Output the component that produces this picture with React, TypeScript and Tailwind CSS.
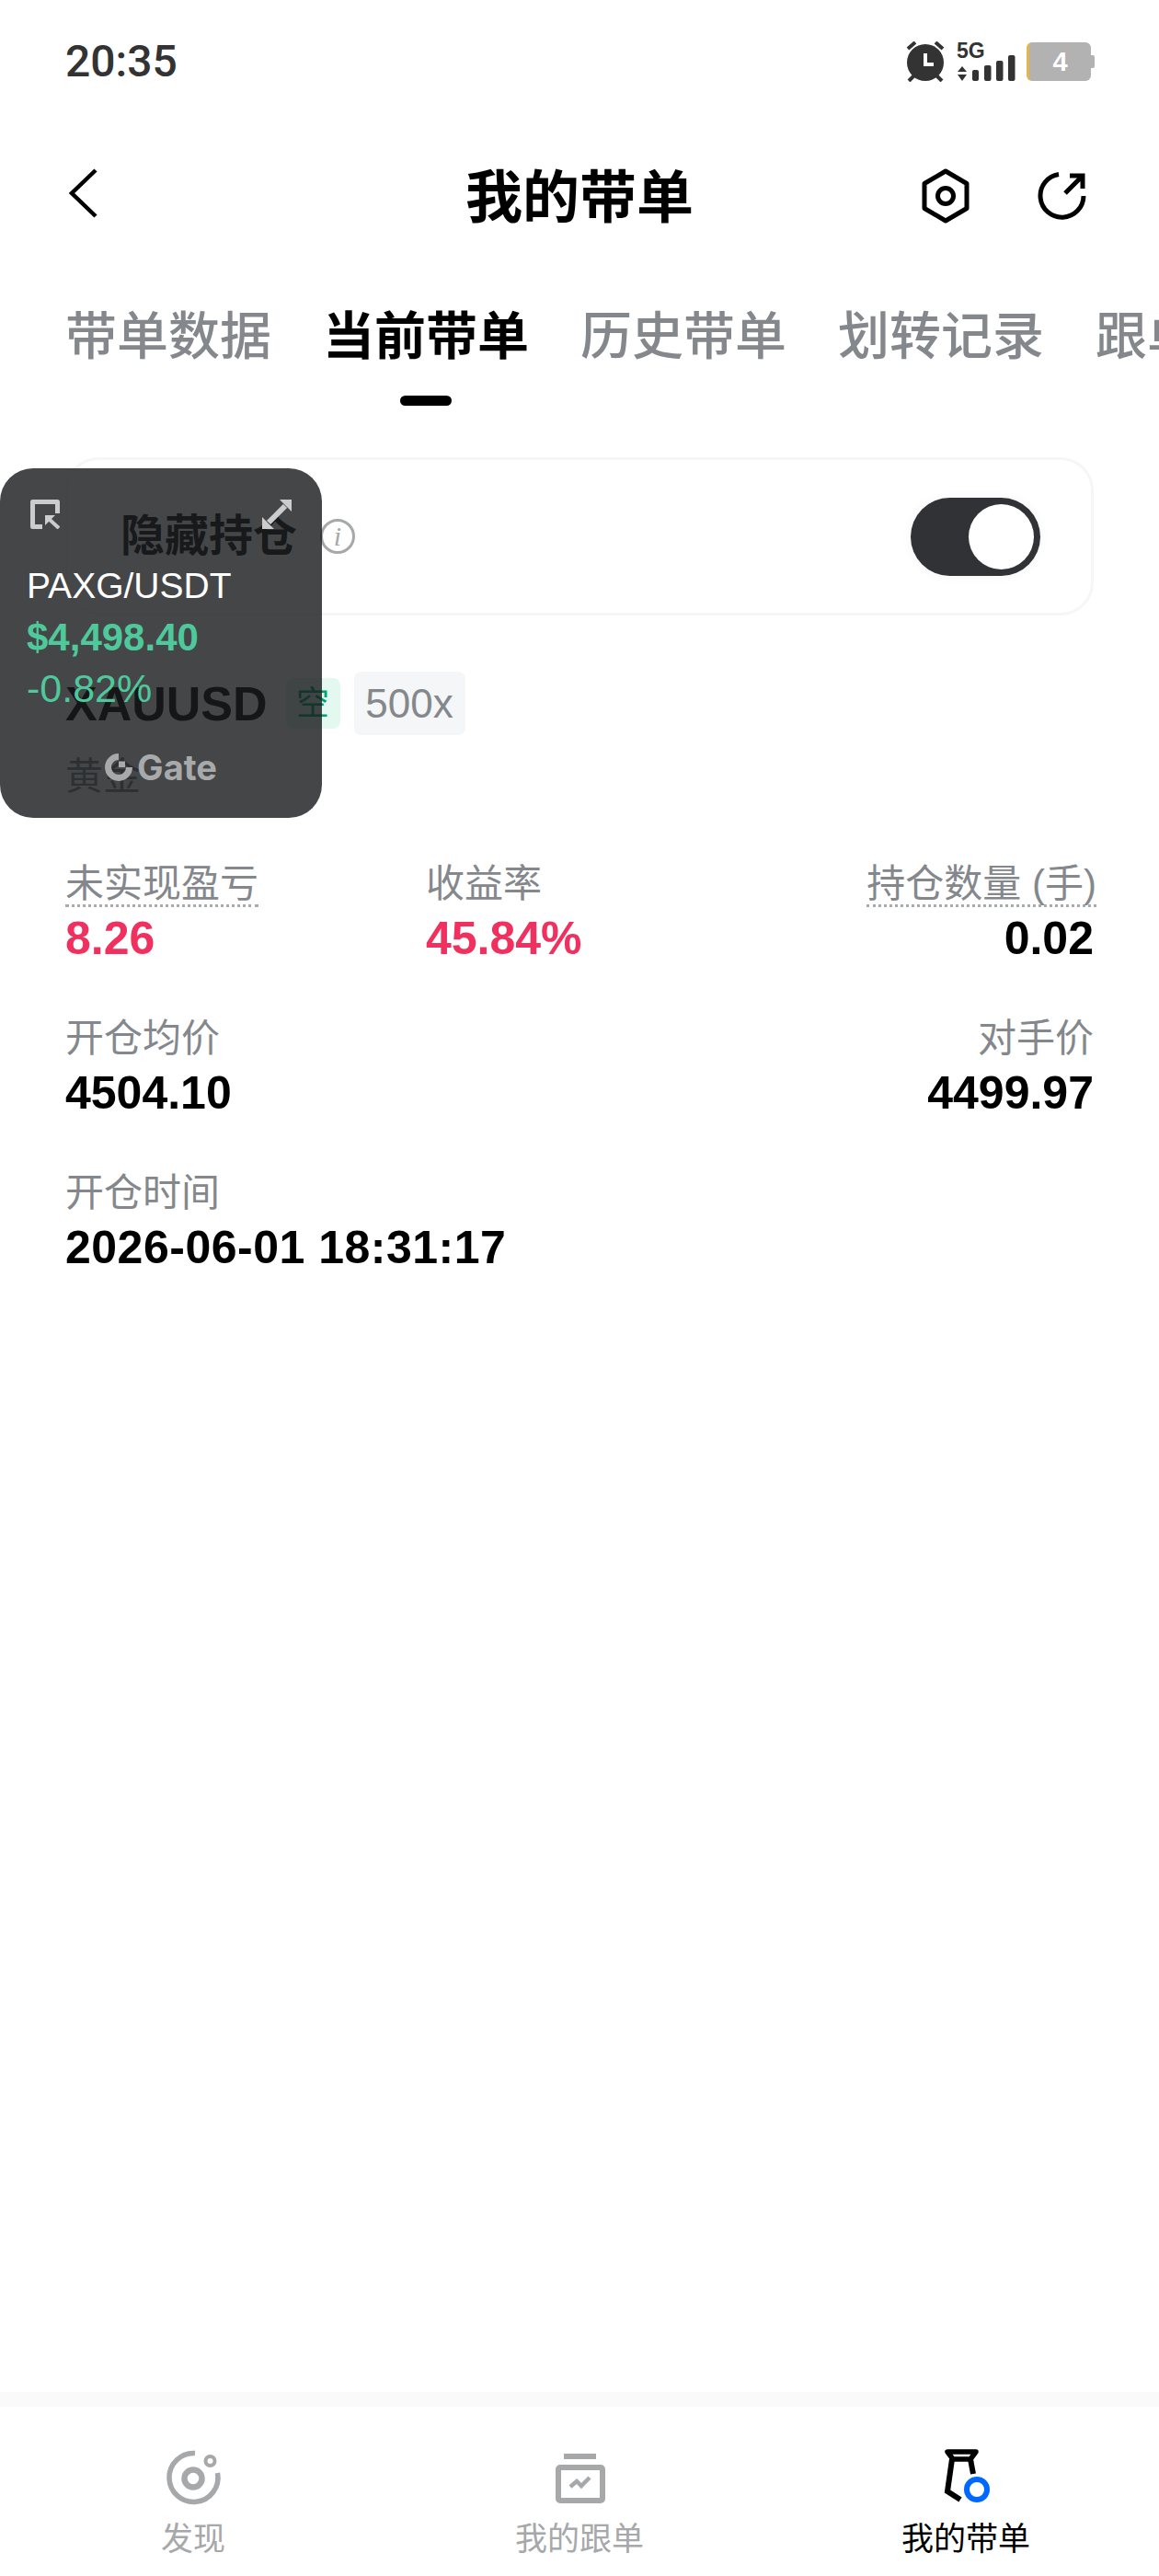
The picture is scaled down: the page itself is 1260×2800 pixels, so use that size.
import React from 'react';

const tabs = ['带单数据', '当前带单', '历史带单', '划转记录', '跟单设置'];

const StatusBar = () => (
  <div className="h-[134px] shrink-0 pl-[71px] pr-[70px] flex items-center justify-between">
    <span className="font-['Roboto',sans-serif] font-medium text-[48px] leading-none text-[#333]">20:35</span>
    <div className="flex items-center">
      {/* alarm */}
      <svg width="46" height="44" viewBox="0 0 46 44" className="mr-[11px]">
        <circle cx="23" cy="23" r="20" fill="#333" />
        <path d="M4 8l8-7M42 8l-8-7M5 43l6-6M41 43l-6-6" stroke="#333" strokeWidth="4" fill="none" />
        <path d="M23 13v12h9" stroke="#fff" strokeWidth="4" fill="none" />
      </svg>
      {/* signal */}
      <div className="relative w-[64px] h-[42px] mr-[12px]">
        <span className="absolute left-0 top-[-3px] text-[23px] leading-[24px] font-bold text-[#333]">5G</span>
        <svg width="64" height="42" viewBox="0 0 64 42" className="block">
          <path d="M1 32l5-6 5 6zM1 35l5 7 5-7z" fill="#333" />
          <rect x="17" y="30" width="7" height="12" rx="2" fill="#333" />
          <rect x="30" y="25" width="7.500" height="17" rx="2" fill="#333" />
          <rect x="43" y="20" width="7.500" height="22" rx="2" fill="#333" />
          <rect x="56" y="14" width="7.500" height="28" rx="2" fill="#333" />
        </svg>
      </div>
      {/* battery */}
      <div className="flex items-center">
        <div className="w-[70px] h-[42px] rounded-[6px] bg-[#b2b2b2] border-l-[3px] border-[#e3b64c] flex items-center justify-center">
          <span className="text-[29px] leading-none font-bold text-white">4</span>
        </div>
        <div className="w-[4px] h-[14px] rounded-r-[2px] bg-[#b2b2b2]" />
      </div>
    </div>
  </div>
);

const TitleBar = () => (
  <div className="h-[158px] shrink-0 pl-[78px] pr-[78px] grid grid-cols-[1fr_auto_1fr] items-center">
    <svg width="36" height="54" viewBox="0 0 36 54" className="block -ml-[7px] -mt-[6px]">
      <path d="M33 2L7 27l26 25" stroke="#000" strokeWidth="4.500" fill="none" />
    </svg>
    <h1 className="pt-[6px] text-[62px] leading-none font-bold text-black">我的带单</h1>
    <div className="flex items-center justify-end gap-[74px]">
      <svg width="52" height="60" viewBox="0 0 52 60" className="block">
        <path d="M26 3l23 13.500v27L26 57 3 43.500v-27z" stroke="#000" strokeWidth="5" fill="none" strokeLinejoin="round" />
        <circle cx="26" cy="30" r="8.500" stroke="#000" strokeWidth="5" fill="none" />
      </svg>
      <svg width="54" height="54" viewBox="0 0 54 54" className="block">
        <path d="M23 3.500A23.500 23.500 0 1 0 50 27" stroke="#000" strokeWidth="5" fill="none" />
        <path d="M30 24L47 7M35 5h14v14" stroke="#000" strokeWidth="5" fill="none" />
      </svg>
    </div>
  </div>
);

const Tabs = () => (
  <div className="mt-[34px] h-[115px] shrink-0 pl-[71px] flex items-start gap-[56px] whitespace-nowrap">
    {tabs.map((t) => (
      <div key={t} className="flex flex-col items-center shrink-0">
        <span className={`h-[80px] flex items-center text-[56px] leading-none ${t === '当前带单' ? 'font-bold text-black' : 'font-medium text-[#84888c]'}`}>{t}</span>
        {t === '当前带单' && <div className="mt-[24px] w-[56px] h-[11px] rounded-full bg-black" />}
      </div>
    ))}
  </div>
);

const Metric = ({ label, value, dotted, red, right, wide }: { label: string; value: string; dotted?: boolean; red?: boolean; right?: boolean; wide?: boolean }) => (
  <div className={`flex flex-col ${right ? 'items-end' : 'items-start'}`}>
    <span className={`h-[50px] text-[42px] leading-[50px] text-[#84888c] whitespace-nowrap ${dotted ? 'border-b-[3px] border-dotted border-[#a8abae]' : ''} ${dotted && right ? '-mr-[3px]' : ''}`}>{label}</span>
    <span className={`mt-[9px] text-[50px] leading-[50px] font-bold ${wide ? 'tracking-[0.5px]' : ''} ${red ? 'text-[#f0315f]' : 'text-black'}`}>{value}</span>
  </div>
);

const PipWidget = () => (
  <div className="absolute left-0 top-[509px] z-10 w-[350px] h-[380px] rounded-[36px] bg-[#191b1d]/[.81] pl-[29px] pr-[33px] pt-[34px]">
    <div className="flex justify-between items-center pl-[4px]">
      <svg width="32" height="32" viewBox="0 0 32 32" className="block">
        <path d="M13 29.500H2.500v-27h27V15" stroke="#ccc" strokeWidth="5" fill="none" strokeLinejoin="round" />
        <path d="M16 17h11L16 28z" fill="#ccc" />
        <path d="M20 21l11 10" stroke="#ccc" strokeWidth="4" fill="none" />
      </svg>
      <svg width="32" height="32" viewBox="0 0 32 32" className="block">
        <path d="M19 0h13v13zM0 19v13h13z" fill="#ccc" />
        <path d="M7 25L25 7" stroke="#ccc" strokeWidth="6" fill="none" />
      </svg>
    </div>
    <div className="mt-[38px] text-[39px] leading-[48px] text-white">PAXG/USDT</div>
    <div className="mt-[8px] text-[42px] leading-[48px] font-bold text-[#4fc99c]">$4,498.40</div>
    <div className="mt-[7px] text-[43px] leading-[48px] text-[#4fc99c]">-0.82%</div>
    <div className="mt-[48px] h-[28px] flex items-center justify-center gap-[4px] pl-[3px] text-[#a8a9aa]">
      <svg width="32" height="32" viewBox="0 0 32 32" className="block shrink-0">
        <path d="M16 4.500A11.500 11.500 0 1 0 27.500 16" stroke="#a8a9aa" strokeWidth="7" fill="none" />
        <path d="M16 9.500h7v6.500h-7z" fill="#a8a9aa" />
      </svg>
      <span className="font-['Inter',sans-serif] font-bold text-[38px] leading-none">Gate</span>
    </div>
  </div>
);

const BottomNav = () => (
  <div className="mt-auto shrink-0">
    <div className="h-[16px] bg-[#fafafa]" />
    <div className="h-[184px] flex">
      <div className="w-[420px] pt-[24px] flex flex-col items-center">
        <svg width="100" height="100" viewBox="0 0 100 100" className="block h-[100px]">
          <path d="M52 26.500A26.500 26.500 0 1 0 76.500 48" stroke="#a6a8aa" strokeWidth="5.500" fill="none" />
          <circle cx="50" cy="54" r="9.500" stroke="#a6a8aa" strokeWidth="6.500" fill="none" />
          <circle cx="68.500" cy="35" r="5" stroke="#a6a8aa" strokeWidth="4" fill="none" />
        </svg>
        <span className="text-[35px] leading-[40px] text-[#a6a8aa]">发现</span>
      </div>
      <div className="w-[420px] pt-[24px] flex flex-col items-center">
        <svg width="100" height="100" viewBox="0 0 100 100" className="block h-[100px]">
          <rect x="33" y="27" width="35" height="6" fill="#a6a8aa" />
          <rect x="27" y="42" width="48" height="36" rx="2" stroke="#a6a8aa" strokeWidth="6" fill="none" />
          <path d="M40 63l7-6 5 5 9-9" stroke="#a6a8aa" strokeWidth="4.500" fill="none" />
        </svg>
        <span className="text-[35px] leading-[40px] text-[#a6a8aa]">我的跟单</span>
      </div>
      <div className="w-[420px] pt-[24px] flex flex-col items-center">
        <svg width="100" height="100" viewBox="0 0 100 100" className="block h-[100px]">
          <path d="M30 25h31l-6 8H36z" stroke="#000" strokeWidth="5.500" fill="none" strokeLinejoin="round" />
          <path d="M35 33l-5 35 14 9M55 33l3 16" stroke="#000" strokeWidth="6" fill="none" />
          <circle cx="62" cy="66" r="11" stroke="#0068ff" strokeWidth="6" fill="none" />
        </svg>
        <span className="text-[35px] leading-[40px] text-black">我的带单</span>
      </div>
    </div>
  </div>
);

export default function App() {
  return (
    <div className="relative w-[1260px] h-[2800px] overflow-hidden bg-white flex flex-col font-['Liberation_Sans','Noto_Sans_CJK_SC',sans-serif]">
      <StatusBar />
      <TitleBar />
      <Tabs />
      <PipWidget />

      <div className="mt-[56px] mx-[71px] h-[172px] shrink-0 rounded-[36px] border-[3px] border-[#f6f6f6] pl-[57px] pr-[55px] flex items-center justify-between">
        <div className="flex items-center gap-[25px]">
          <span className="text-[48px] leading-none font-bold text-[#111]">隐藏持仓</span>
          <div className="w-[38px] h-[38px] rounded-full border-[3px] border-[#a6a8aa] flex items-center justify-center">
            <span className="font-['Liberation_Serif',serif] italic text-[30px] leading-none text-[#a6a8aa]">i</span>
          </div>
        </div>
        <div className="w-[141px] h-[85px] rounded-full bg-[#303236] p-[7px] flex justify-end shadow-[0_0_12px_rgba(0,0,0,0.05)]">
          <div className="w-[71px] h-[71px] rounded-full bg-white" />
        </div>
      </div>

      <div className="mt-[61px] ml-[71px] h-[69px] shrink-0 flex items-center">
        <span className="text-[52px] leading-none font-bold text-black">XAUUSD</span>
        <div className="ml-[20px] w-[59px] h-[55px] rounded-[8px] bg-[#e3f9ef] flex items-center justify-center text-[36px] leading-none text-[#00a36f]">空</div>
        <div className="ml-[15px] w-[121px] h-[69px] rounded-[8px] bg-[#f5f6f7] flex items-center justify-center text-[44px] leading-none text-[#84888c]">500x</div>
      </div>
      <div className="mt-[20px] ml-[71px] text-[41px] leading-[50px] text-[#84888c]">黄金</div>

      <div className="mt-[67px] mx-[71px] grid grid-cols-[392px_1fr_auto] gap-y-[59px]">
        <Metric label="未实现盈亏" value="8.26" dotted red />
        <Metric label="收益率" value="45.84%" red />
        <Metric label="持仓数量 (手)" value="0.02" dotted right />
        <Metric label="开仓均价" value="4504.10" />
        <div />
        <Metric label="对手价" value="4499.97" right />
        <div className="col-span-3">
          <Metric label="开仓时间" value="2026-06-01 18:31:17" wide />
        </div>
      </div>

      <BottomNav />
    </div>
  );
}
